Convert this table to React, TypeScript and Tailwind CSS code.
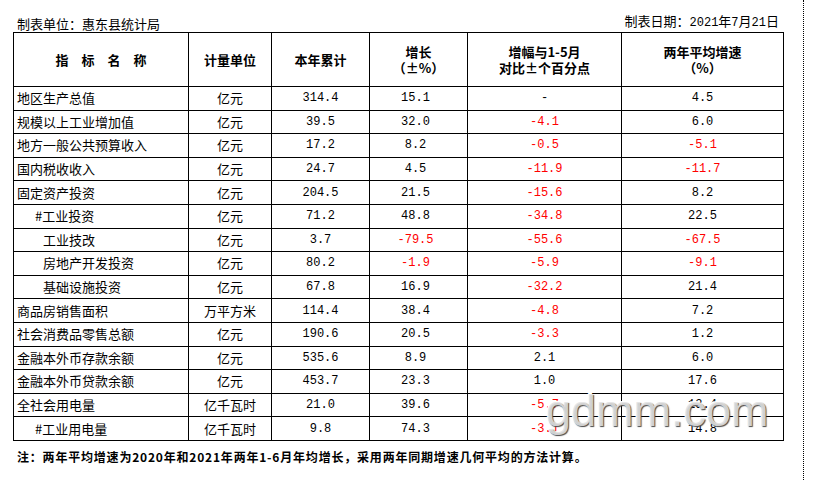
type Row = {
  name: string;
  indent?: "hash" | "sub";
  unit: string;
  total: string;
  growth: string;
  diff: string;
  avg: string;
};

const rows: Row[] = [
  { name: "地区生产总值", unit: "亿元", total: "314.4", growth: "15.1", diff: "-", avg: "4.5" },
  { name: "规模以上工业增加值", unit: "亿元", total: "39.5", growth: "32.0", diff: "-4.1", avg: "6.0" },
  { name: "地方一般公共预算收入", unit: "亿元", total: "17.2", growth: "8.2", diff: "-0.5", avg: "-5.1" },
  { name: "国内税收收入", unit: "亿元", total: "24.7", growth: "4.5", diff: "-11.9", avg: "-11.7" },
  { name: "固定资产投资", unit: "亿元", total: "204.5", growth: "21.5", diff: "-15.6", avg: "8.2" },
  { name: "#工业投资", indent: "hash", unit: "亿元", total: "71.2", growth: "48.8", diff: "-34.8", avg: "22.5" },
  { name: "工业技改", indent: "sub", unit: "亿元", total: "3.7", growth: "-79.5", diff: "-55.6", avg: "-67.5" },
  { name: "房地产开发投资", indent: "sub", unit: "亿元", total: "80.2", growth: "-1.9", diff: "-5.9", avg: "-9.1" },
  { name: "基础设施投资", indent: "sub", unit: "亿元", total: "67.8", growth: "16.9", diff: "-32.2", avg: "21.4" },
  { name: "商品房销售面积", unit: "万平方米", total: "114.4", growth: "38.4", diff: "-4.8", avg: "7.2" },
  { name: "社会消费品零售总额", unit: "亿元", total: "190.6", growth: "20.5", diff: "-3.3", avg: "1.2" },
  { name: "金融本外币存款余额", unit: "亿元", total: "535.6", growth: "8.9", diff: "2.1", avg: "6.0" },
  { name: "金融本外币贷款余额", unit: "亿元", total: "453.7", growth: "23.3", diff: "1.0", avg: "17.6" },
  { name: "全社会用电量", unit: "亿千瓦时", total: "21.0", growth: "39.6", diff: "-5.7", avg: "13.4" },
  { name: "#工业用电量", indent: "hash", unit: "亿千瓦时", total: "9.8", growth: "74.3", diff: "-3.1", avg: "14.8" },
];

const cjk = "font-['Noto_Sans_CJK_SC',sans-serif]";
const num = "font-['Liberation_Mono','Noto_Sans_CJK_SC',monospace] text-[12px]";

function Num({ v }: { v: string }) {
  const neg = v.startsWith("-") && v.length > 1;
  return <span className={neg ? "text-[#ff0000]" : "text-black"}>{v}</span>;
}

function App() {
  return (
    <div className={`relative w-[816px] h-[480px] bg-white text-black overflow-hidden [text-spacing-trim:space-all] ${cjk}`}>
      <div className="absolute left-[803px] top-0 h-[480px] border-l border-dotted border-black" />
      <div className="pl-[13px] w-[782px] pt-[13px]">
        <div className="flex justify-between items-end text-[13px] leading-[17px] pl-[4px] pr-[3px] h-[19px]">
          <span>制表单位：惠东县统计局</span>
          <span>
            制表日期：<span className="font-['Liberation_Mono',monospace] text-[12px]">2021</span>年
            <span className="font-['Liberation_Mono',monospace] text-[12px]">7</span>月
            <span className="font-['Liberation_Mono',monospace] text-[12px]">21</span>日
          </span>
        </div>
        <table className="table-fixed border-collapse w-[770px] text-[13px] leading-[16px]">
          <colgroup>
            <col className="w-[175px]" />
            <col className="w-[83px]" />
            <col className="w-[98px]" />
            <col className="w-[98px]" />
            <col className="w-[154px]" />
            <col className="w-[162px]" />
          </colgroup>
          <thead>
            <tr className="h-[54px] font-bold">
              <th className="border border-black">指　标　名　称</th>
              <th className="border border-black">计量单位</th>
              <th className="border border-black">本年累计</th>
              <th className="border border-black">
                增长
                <br />（±%）
              </th>
              <th className="border border-black">
                增幅与1-5月
                <br />
                对比±个百分点
              </th>
              <th className="border border-black">
                两年平均增速
                <br />（%）
              </th>
            </tr>
          </thead>
          <tbody>
            {rows.map((r) => (
              <tr key={r.name} className="h-[23.6px]">
                <td
                  className={`border border-black p-0 ${
                    r.indent === "hash" ? "pl-[21px]" : r.indent === "sub" ? "pl-[29px]" : "pl-[3px]"
                  }`}
                >
                  {r.name}
                </td>
                <td className="border border-black p-0 text-center">{r.unit}</td>
                <td className={`border border-black p-0 text-center ${num}`}>
                  <Num v={r.total} />
                </td>
                <td className={`border border-black p-0 text-center pr-[6px] ${num}`}>
                  <Num v={r.growth} />
                </td>
                <td className={`border border-black p-0 text-center ${num}`}>
                  <Num v={r.diff} />
                </td>
                <td className={`border border-black p-0 text-center ${num}`}>
                  <Num v={r.avg} />
                </td>
              </tr>
            ))}
          </tbody>
        </table>
        <p className="mt-[8px] pl-[4px] text-[12px] font-bold tracking-[0.8px] leading-[16px]">
          注：两年平均增速为2020年和2021年两年1-6月年均增长，采用两年同期增速几何平均的方法计算。
        </p>
      </div>
      <div className="absolute left-[546px] top-[384px] font-['Liberation_Sans',sans-serif] text-[45px] leading-[54px] text-[#e4e4e4]/90 [text-shadow:1px_1px_1px_#4a4a4a,-1px_-1px_0_#ffffff]">
        gdmm.com
      </div>
    </div>
  );
}

export default App;
